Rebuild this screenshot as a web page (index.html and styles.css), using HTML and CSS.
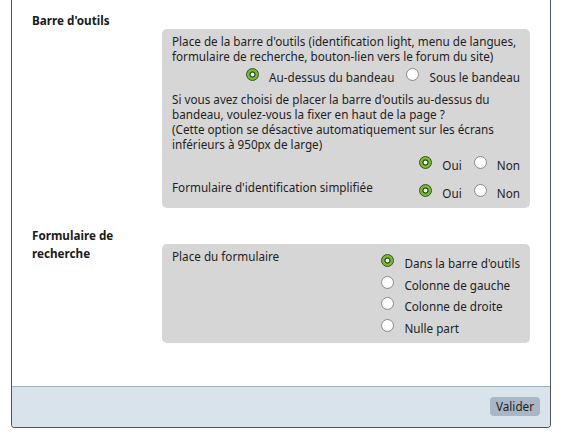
FILE: index.html
```html
<!DOCTYPE html>
<html lang="fr">
<head>
    <meta charset="UTF-8">
    <meta name="viewport" content="width=device-width, initial-scale=1.0">
    <title>Configuration</title>
    <link rel="stylesheet" href="styles.css">
</head>
<body>
    <form class="config-panel">
        <div class="config-body">
            <div class="section">
                <h3 class="section-title">Barre d'outils</h3>
                <div class="settings-box">
                    <div class="setting">
                        <span class="setting-label">Place de la barre d'outils (identification light, menu de langues, formulaire de recherche, bouton-lien vers le forum du site)</span>
                        <span class="options">
                            <label><input type="radio" name="toolbar_pos" checked> Au-dessus du bandeau</label>
                            <label><input type="radio" name="toolbar_pos"> Sous le bandeau</label>
                        </span>
                    </div>
                    <div class="setting">
                        <span class="setting-label">Si vous avez choisi de placer la barre d'outils au-dessus du bandeau, voulez-vous la fixer en haut de la page ?<br>(Cette option se désactive automatiquement sur les écrans inférieurs à 950px de large)</span>
                        <span class="options">
                            <label><input type="radio" name="toolbar_fixed" checked> Oui</label>
                            <label><input type="radio" name="toolbar_fixed"> Non</label>
                        </span>
                    </div>
                    <div class="setting">
                        <span class="setting-label">Formulaire d'identification simplifiée</span>
                        <span class="options">
                            <label><input type="radio" name="light_login" checked> Oui</label>
                            <label><input type="radio" name="light_login"> Non</label>
                        </span>
                    </div>
                </div>
            </div>

            <div class="section">
                <h3 class="section-title">Formulaire de recherche</h3>
                <div class="settings-box">
                    <div class="setting">
                        <span class="setting-label">Place du formulaire</span>
                        <span class="options options-list">
                            <label><input type="radio" name="search_pos" checked> Dans la barre d'outils</label>
                            <label><input type="radio" name="search_pos"> Colonne de gauche</label>
                            <label><input type="radio" name="search_pos"> Colonne de droite</label>
                            <label><input type="radio" name="search_pos"> Nulle part</label>
                        </span>
                    </div>
                </div>
            </div>
        </div>

        <div class="config-footer">
            <button type="submit" class="btn-submit">Valider</button>
        </div>
    </form>
</body>
</html>
```
FILE: styles.css
```css
body {
    margin: 0;
    font-family: "Noto Sans", sans-serif;
    font-size: 11.7px;
    color: #1e1e1e;
    background-color: #ffffff;
}
.config-panel {
    margin: 0 19px 0 11px;
    border: 1px solid #4b5560;
    border-top: none;
    border-radius: 0 0 4px 4px;
    overflow: hidden;
}
.config-body {
    padding: 11px 20px 43px 20px;
}
.section {
    display: grid;
    grid-template-columns: 130px 1fr;
    margin-bottom: 18px;
}
.section:last-child {
    margin-bottom: 0;
}
.section-title {
    margin: 0;
    padding-right: 10px;
    font-size: 11.7px;
    font-weight: bold;
    line-height: 18px;
    color: #1a1a1a;
}
.settings-box {
    margin-top: 18px;
    padding: 5px 10px 6px 10px;
    background-color: #d6d6d6;
    border-radius: 5px;
}
.setting {
    display: flex;
    flex-wrap: wrap;
    margin-bottom: 6px;
}
.setting:last-child {
    margin-bottom: 0;
}
.setting-label {
    line-height: 15px;
}
.options {
    margin-left: auto;
    margin-top: 4px;
    line-height: 18px;
    white-space: nowrap;
}
.options label {
    margin-left: 6px;
}
.options label:first-child {
    margin-left: 0;
}
.options-list {
    display: flex;
    flex-direction: column;
    margin-top: 5px;
}
.options-list label {
    margin-left: 0;
    margin-bottom: 3.7px;
}
.options-list label:last-child {
    margin-bottom: 0;
}
input[type="radio"] {
    appearance: none;
    -webkit-appearance: none;
    width: 13px;
    height: 13px;
    margin: 0 7px 0 3px;
    vertical-align: 1px;
    border: 1px solid #8c8c8c;
    border-radius: 50%;
    background: radial-gradient(circle at 50% 35%, #ffffff 0, #ffffff 50%, #ececec 100%);
    box-sizing: border-box;
}
input[type="radio"]:checked {
    border-color: #2f5a10;
    background: radial-gradient(circle, #f4f8ee 0, #f4f8ee 1.6px, #34611a 2.2px, #34611a 2.9px, #7cb343 3.4px, #7cb343 100%);
}
.config-footer {
    display: flex;
    justify-content: flex-end;
    padding: 10px 10px 11px;
    background-color: #d9e3ec;
    border-top: 1px solid #9eafc0;
}
.btn-submit {
    padding: 2px 6px;
    font-family: "Noto Sans", sans-serif;
    font-size: 11.7px;
    line-height: 15px;
    color: #1e1e1e;
    background-color: #a8b6c5;
    border: none;
    border-radius: 4px;
    cursor: pointer;
}
.btn-submit:hover {
    background-color: #95a5b6;
}
```
